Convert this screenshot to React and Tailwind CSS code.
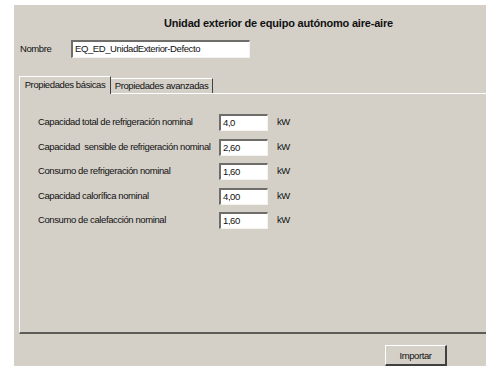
import React from "react";

const rows = [
  { label: "Capacidad total de refrigeración nominal", value: "4,0" },
  { label: "Capacidad  sensible de refrigeración nominal", value: "2,60" },
  { label: "Consumo de refrigeración nominal", value: "1,60" },
  { label: "Capacidad calorífica nominal", value: "4,00" },
  { label: "Consumo de calefacción nominal", value: "1,60" },
];

function Sunken({ value, className }) {
  return (
    <div
      className={`bg-white border-t-2 border-l-2 border-b border-r border-t-[#6f6d69] border-l-[#6f6d69] border-b-[#f4f3f0] border-r-[#f4f3f0] pl-[2px] leading-[14px] whitespace-pre ${className}`}
    >
      {value}
    </div>
  );
}

export default function App() {
  return (
    <div
      className="w-[492px] h-[368px] bg-white overflow-hidden text-[9.5px] tracking-[-0.4px] text-[#111]"
      style={{ fontFamily: '"Liberation Sans", Arial, sans-serif' }}
    >
      <div className="ml-[14px] mt-[5px] w-[472px] h-[361px] bg-[#d4d0c8] flex flex-col">
        {/* title */}
        <div className="h-[29px] pt-[12px] pl-[150px] font-bold text-[11px] tracking-[-0.2px] leading-[12px] whitespace-nowrap">
          Unidad exterior de equipo autónomo aire-aire
        </div>

        {/* nombre */}
        <div className="flex items-center h-[18px] mt-[6px]">
          <span className="w-[57px] pl-[6px]">Nombre</span>
          <Sunken value="EQ_ED_UnidadExterior-Defecto" className="w-[179px] h-[18px]" />
        </div>

        {/* tabs */}
        <div className="flex items-end mt-[17px] pl-[5px] h-[18px] whitespace-nowrap">
          <div className="h-[18px] w-[92px] border-t border-l border-r border-t-white border-l-white border-r-[#404040] flex items-center justify-center relative top-[1px] bg-[#d4d0c8] z-10">
            Propiedades básicas
          </div>
          <div className="h-[15px] w-[102px] border-t border-r border-t-white border-r-[#404040] flex items-center justify-center">
            Propiedades avanzadas
          </div>
        </div>

        {/* tab body */}
        <div className="ml-[5px] h-[241px] border-t border-l border-b-2 border-t-white border-l-white border-b-[#5c5b58] pt-[20px] pl-[18px] flex flex-col gap-[7.5px]">
          {rows.map((r) => (
            <div key={r.label} className="flex items-center h-[17px]">
              <span className="w-[181px] whitespace-pre">{r.label}</span>
              <Sunken value={r.value} className="w-[49px] h-[17px]" />
              <span className="ml-[9px]">kW</span>
            </div>
          ))}
        </div>

        {/* footer */}
        <div className="flex justify-end pr-[39px] pt-[11px]">
          <button className="w-[62px] h-[21px] bg-[#d4d0c8] border-t border-l border-b-2 border-r-2 border-t-white border-l-white border-b-[#404040] border-r-[#404040] leading-[17px]">
            Importar
          </button>
        </div>
      </div>
    </div>
  );
}
